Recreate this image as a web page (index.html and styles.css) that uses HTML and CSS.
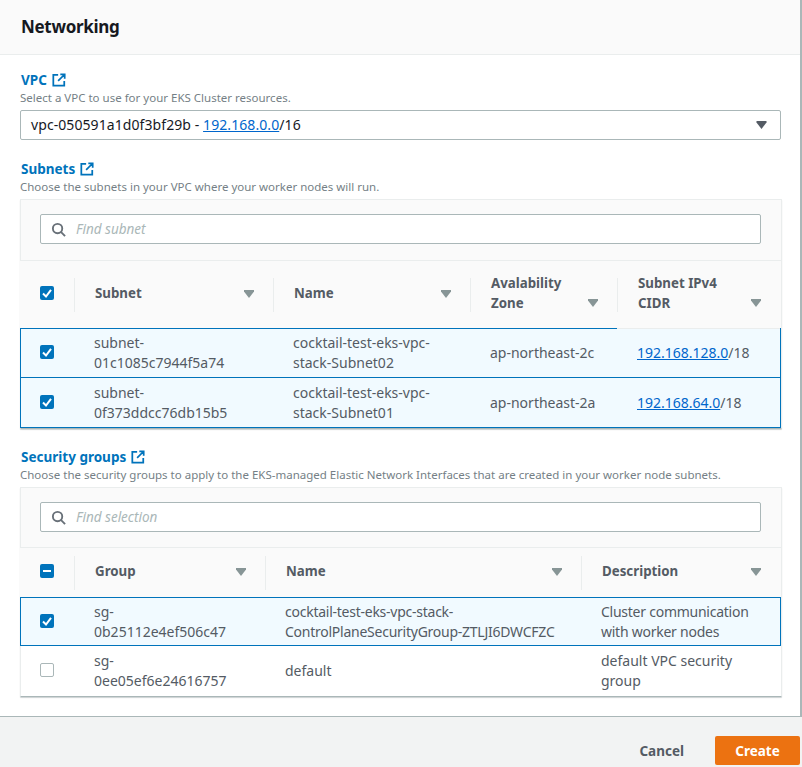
FILE: index.html
```html
<!DOCTYPE html>
<html>

<head>
    <title>Networking</title>
    <meta charset="UTF-8">

    <link rel="stylesheet" href="styles.css">

</head>

<body>
    <svg class="defs" width="0" height="0">
        <symbol id="ext" viewBox="0 0 16 16">
            <path d="M7 2H1.500V14.500H14V9M9.500 1.500H14.500V6.500M14 2L7 9" fill="none" stroke="#0073bb" stroke-width="2" />
        </symbol>
        <symbol id="check" viewBox="0 0 14 14">
            <rect width="14" height="14" rx="2" fill="#0073bb" />
            <path d="M3 7.500L6 10.500L11 3.800" fill="none" stroke="#fff" stroke-width="2" />
        </symbol>
        <symbol id="dash" viewBox="0 0 14 14">
            <rect width="14" height="14" rx="2" fill="#0073bb" />
            <path d="M3 7H11" fill="none" stroke="#fff" stroke-width="2" />
        </symbol>
        <symbol id="caret" viewBox="0 0 10 8">
            <path d="M0 0H10V1.500L5 8L0 1.500Z" />
        </symbol>
        <symbol id="search" viewBox="0 0 16 16">
            <circle cx="7" cy="7" r="5" fill="none" stroke="#687078" stroke-width="2" />
            <path d="M10.500 10.500L15 15" fill="none" stroke="#687078" stroke-width="2" />
        </symbol>
    </svg>

    <div class="modal">
        <header class="modal-header">
            <h1>Networking</h1>
        </header>

        <div class="modal-body">
            <div class="label">VPC <svg class="ext"><use href="#ext" /></svg></div>
            <div class="hint">Select a VPC to use for your EKS Cluster resources.</div>
            <div class="select">
                <span>vpc-050591a1d0f3bf29b - <a href="#">192.168.0.0</a>/16</span>
                <svg class="select-caret"><use href="#caret" /></svg>
            </div>

            <div class="label next">Subnets <svg class="ext"><use href="#ext" /></svg></div>
            <div class="hint">Choose the subnets in your VPC where your worker nodes will run.</div>
            <div class="table subnets">
                <div class="filter">
                    <div class="search">
                        <svg class="search-icon"><use href="#search" /></svg>
                        <span>Find subnet</span>
                    </div>
                </div>
                <div class="row head">
                    <div class="cell box"><svg class="check"><use href="#check" /></svg></div>
                    <div class="cell"><span>Subnet</span><svg class="caret"><use href="#caret" /></svg></div>
                    <div class="cell"><span>Name</span><svg class="caret"><use href="#caret" /></svg></div>
                    <div class="cell"><span>Avalability<br>Zone</span><svg class="caret low"><use href="#caret" /></svg></div>
                    <div class="cell"><span>Subnet IPv4<br>CIDR</span><svg class="caret low"><use href="#caret" /></svg></div>
                </div>
                <div class="row selected">
                    <div class="cell box"><svg class="check"><use href="#check" /></svg></div>
                    <div class="cell">subnet-<br>01c1085c7944f5a74</div>
                    <div class="cell">cocktail-test-eks-vpc-<br>stack-Subnet02</div>
                    <div class="cell">ap-northeast-2c</div>
                    <div class="cell light-top"><span><a href="#">192.168.128.0</a>/18</span></div>
                </div>
                <div class="row selected">
                    <div class="cell box"><svg class="check"><use href="#check" /></svg></div>
                    <div class="cell">subnet-<br>0f373ddcc76db15b5</div>
                    <div class="cell">cocktail-test-eks-vpc-<br>stack-Subnet01</div>
                    <div class="cell">ap-northeast-2a</div>
                    <div class="cell"><span><a href="#">192.168.64.0</a>/18</span></div>
                </div>
            </div>

            <div class="label next-group">Security groups <svg class="ext"><use href="#ext" /></svg></div>
            <div class="hint">Choose the security groups to apply to the EKS-managed Elastic Network Interfaces that are created in your worker node subnets.</div>
            <div class="table groups">
                <div class="filter">
                    <div class="search">
                        <svg class="search-icon"><use href="#search" /></svg>
                        <span>Find selection</span>
                    </div>
                </div>
                <div class="row head">
                    <div class="cell box"><svg class="check"><use href="#dash" /></svg></div>
                    <div class="cell"><span>Group</span><svg class="caret"><use href="#caret" /></svg></div>
                    <div class="cell"><span>Name</span><svg class="caret"><use href="#caret" /></svg></div>
                    <div class="cell"><span>Description</span><svg class="caret"><use href="#caret" /></svg></div>
                </div>
                <div class="row selected">
                    <div class="cell box"><svg class="check"><use href="#check" /></svg></div>
                    <div class="cell">sg-<br>0b25112e4ef506c47</div>
                    <div class="cell tight">cocktail-test-eks-vpc-stack-<br>ControlPlaneSecurityGroup-ZTLJI6DWCFZC</div>
                    <div class="cell tight">Cluster communication<br>with worker nodes</div>
                </div>
                <div class="row">
                    <div class="cell box"><span class="unchecked"></span></div>
                    <div class="cell">sg-<br>0ee05ef6e24616757</div>
                    <div class="cell">default</div>
                    <div class="cell">default VPC security<br>group</div>
                </div>
            </div>
        </div>
    </div>

    <footer class="actions">
        <button type="button" class="cancel">Cancel</button>
        <button type="button" class="create">Create</button>
    </footer>
</body>

</html>
```

FILE: styles.css
```css
* {
    box-sizing: border-box;
}

html,
body {
    height: 100%;
}

body {
    font-family: "Noto Sans", Arial, sans-serif;
    font-size: 14px;
    line-height: 20px;
    color: #545b64;
    margin: 0;
    background-color: #f2f3f3;
    overflow: hidden;
}

a {
    color: #0066cc;
    text-decoration: underline;
}

.defs {
    position: absolute;
}

.modal {
    width: 802px;
    height: 717px;
    background-color: white;
    border-right: 2px solid #aab7b8;
    border-bottom: 1px solid #aab7b8;
}

.modal-header {
    height: 55px;
    padding: 16px 21px 0;
    background-color: #fafafa;
    border-bottom: 1px solid #eaeded;
}

h1 {
    margin: 0;
    font-size: 17px;
    line-height: 22px;
    letter-spacing: -0.3px;
    font-weight: 700;
    color: #16191f;
}

.modal-body {
    padding: 15px 20px 0;
}

.label {
    display: flex;
    align-items: center;
    gap: 5px;
    height: 20px;
    font-size: 13.500px;
    font-weight: 700;
    color: #0073bb;
    padding-left: 1px;
}

.label.next {
    margin-top: 19px;
}

.label.next-group {
    margin-top: 18px;
}

.ext {
    width: 14px;
    height: 14px;
}

.hint {
    font-size: 11.500px;
    line-height: 16px;
    color: #757f86;
    margin-bottom: 4px;
}

.select {
    display: flex;
    justify-content: space-between;
    align-items: center;
    width: 761px;
    height: 30px;
    padding: 0 10px;
    color: #16191f;
    letter-spacing: 0.08px;
    border: 1px solid #aab7b8;
    border-radius: 2px;
}

.select-caret {
    width: 11px;
    height: 8px;
    margin-right: 3px;
    fill: #545b64;
}

.table {
    width: 762px;
    border: 1px solid #eaeded;
    border-bottom: 1px solid #aab7b8;
    border-radius: 1px;
    box-shadow: 0 1px 1px rgba(0, 28, 36, 0.2);
}

.filter {
    height: 61px;
    padding: 14px 20px 0 19px;
    background-color: #fafafa;
    border-bottom: 1px solid #eaeded;
}

.groups .filter {
    height: 60px;
}

.search {
    display: flex;
    align-items: center;
    gap: 10px;
    height: 30px;
    padding: 0 10px;
    background-color: white;
    border: 1px solid #aab7b8;
    border-radius: 2px;
    font-size: 13.500px;
    font-style: italic;
    color: #aab7b8;
}

.search-icon {
    width: 15px;
    height: 15px;
}

.row {
    display: grid;
    height: 50px;
    margin-left: -1px;
    border: 1px solid transparent;
}

.subnets .row {
    grid-template-columns: 53px 199px 197px 147px 1fr;
}

.groups .row {
    grid-template-columns: 53px 191px 316px 1fr;
}

.cell {
    display: flex;
    flex-direction: column;
    justify-content: center;
    min-width: 0;
    white-space: nowrap;
    padding: 0 19px 0 20px;
}

.box {
    padding: 0 0 0 19px;
}

.tight {
    letter-spacing: -0.25px;
}

.selected {
    background-color: #f1faff;
    border-color: #0073bb;
}

.selected + .selected {
    border-top: none;
}

.selected + .selected .cell:not(.box) {
    padding-top: 1px;
}

.light-top {
    margin-top: -1px;
    border-top: 1px solid #eaeded;
}

.head {
    background-color: #fafafa;
    font-size: 13.300px;
    font-weight: 700;
    align-items: center;
    height: 67px;
    border-width: 0 1px;
    border-color: transparent;
}

.head .cell {
    flex-direction: row;
    justify-content: space-between;
    align-items: center;
    height: 34px;
    border-left: 1px solid #eaeded;
}

.head .cell > span {
    margin-bottom: 3px;
}

.head .box {
    padding: 0 0 0 19px;
    justify-content: flex-start;
    border-left: none;
}

.groups .head {
    height: 49px;
}

.groups .selected {
    height: 49px;
}

.check,
.unchecked {
    display: block;
    width: 14px;
    height: 14px;
    margin-bottom: 2px;
}

.head .check {
    margin-bottom: 3px;
}

.unchecked {
    border: 1px solid #aab7b8;
    border-radius: 2px;
    background-color: white;
}

.caret {
    flex: none;
    width: 10px;
    height: 8px;
    margin-bottom: 2px;
    fill: #879596;
}

.caret.low {
    align-self: flex-end;
    margin-bottom: 5px;
}

.actions {
    display: flex;
    justify-content: flex-end;
    align-items: center;
    gap: 31px;
    padding: 19px 2px 0 0;
}

button {
    font: inherit;
    font-size: 13.500px;
    font-weight: 700;
    border: none;
    cursor: pointer;
}

.cancel {
    background: none;
    color: #545b64;
    padding: 0;
}

.create {
    width: 85px;
    height: 29px;
    border-radius: 2px;
    background-color: #ec7211;
    color: white;
}
```
